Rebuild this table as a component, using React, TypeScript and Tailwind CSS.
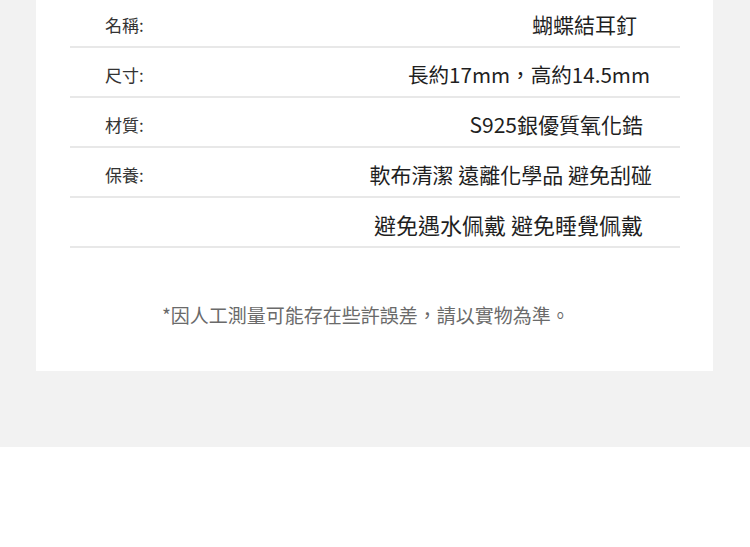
import React from "react";

const font = { fontFamily: '"Noto Sans CJK TC", "Noto Sans", sans-serif' };

type Row = { label: string; value: string; pr: string; size: string };

export default function App() {
  const rows: Row[] = [
    { label: "名稱:", value: "蝴蝶結耳釘", pr: "pr-[43px]", size: "text-[21px]" },
    { label: "尺寸:", value: "長約17mm，高約14.5mm", pr: "pr-[30px]", size: "text-[20.6px]" },
    { label: "材質:", value: "S925銀優質氧化鋯", pr: "pr-[37px]", size: "text-[21px]" },
    { label: "保養:", value: "軟布清潔 遠離化學品 避免刮碰", pr: "pr-[28px]", size: "text-[21px]" },
    { label: "", value: "避免遇水佩戴 避免睡覺佩戴", pr: "pr-[37px]", size: "text-[22px]" },
  ];
  return (
    <div className="w-[750px] h-[547px] bg-white overflow-hidden" style={font}>
      <div className="h-[447px] bg-[#f2f2f2] pl-[36px]">
        <div className="w-[677px] h-[371px] bg-white flex flex-col">
          <div className="ml-[34px] w-[610px] mt-[-2px] flex flex-col">
            {rows.map((r, i) => (
              <div
                key={i}
                className="h-[50px] border-b-2 border-[#e8e8e8] flex items-center justify-between pt-[4px]"
              >
                <span className="pl-[35px] text-[17px] text-[#333333] leading-none">{r.label}</span>
                <span className={`${r.pr} ${r.size} text-[#1f1f1f] leading-none whitespace-nowrap`}>
                  {r.value}
                </span>
              </div>
            ))}
          </div>
          <div className="mt-[55px] pl-[126px] text-[19px] leading-[24px] text-[#6a6a6a] whitespace-nowrap">
            *因人工測量可能存在些許誤差，請以實物為準。
          </div>
        </div>
      </div>
    </div>
  );
}
